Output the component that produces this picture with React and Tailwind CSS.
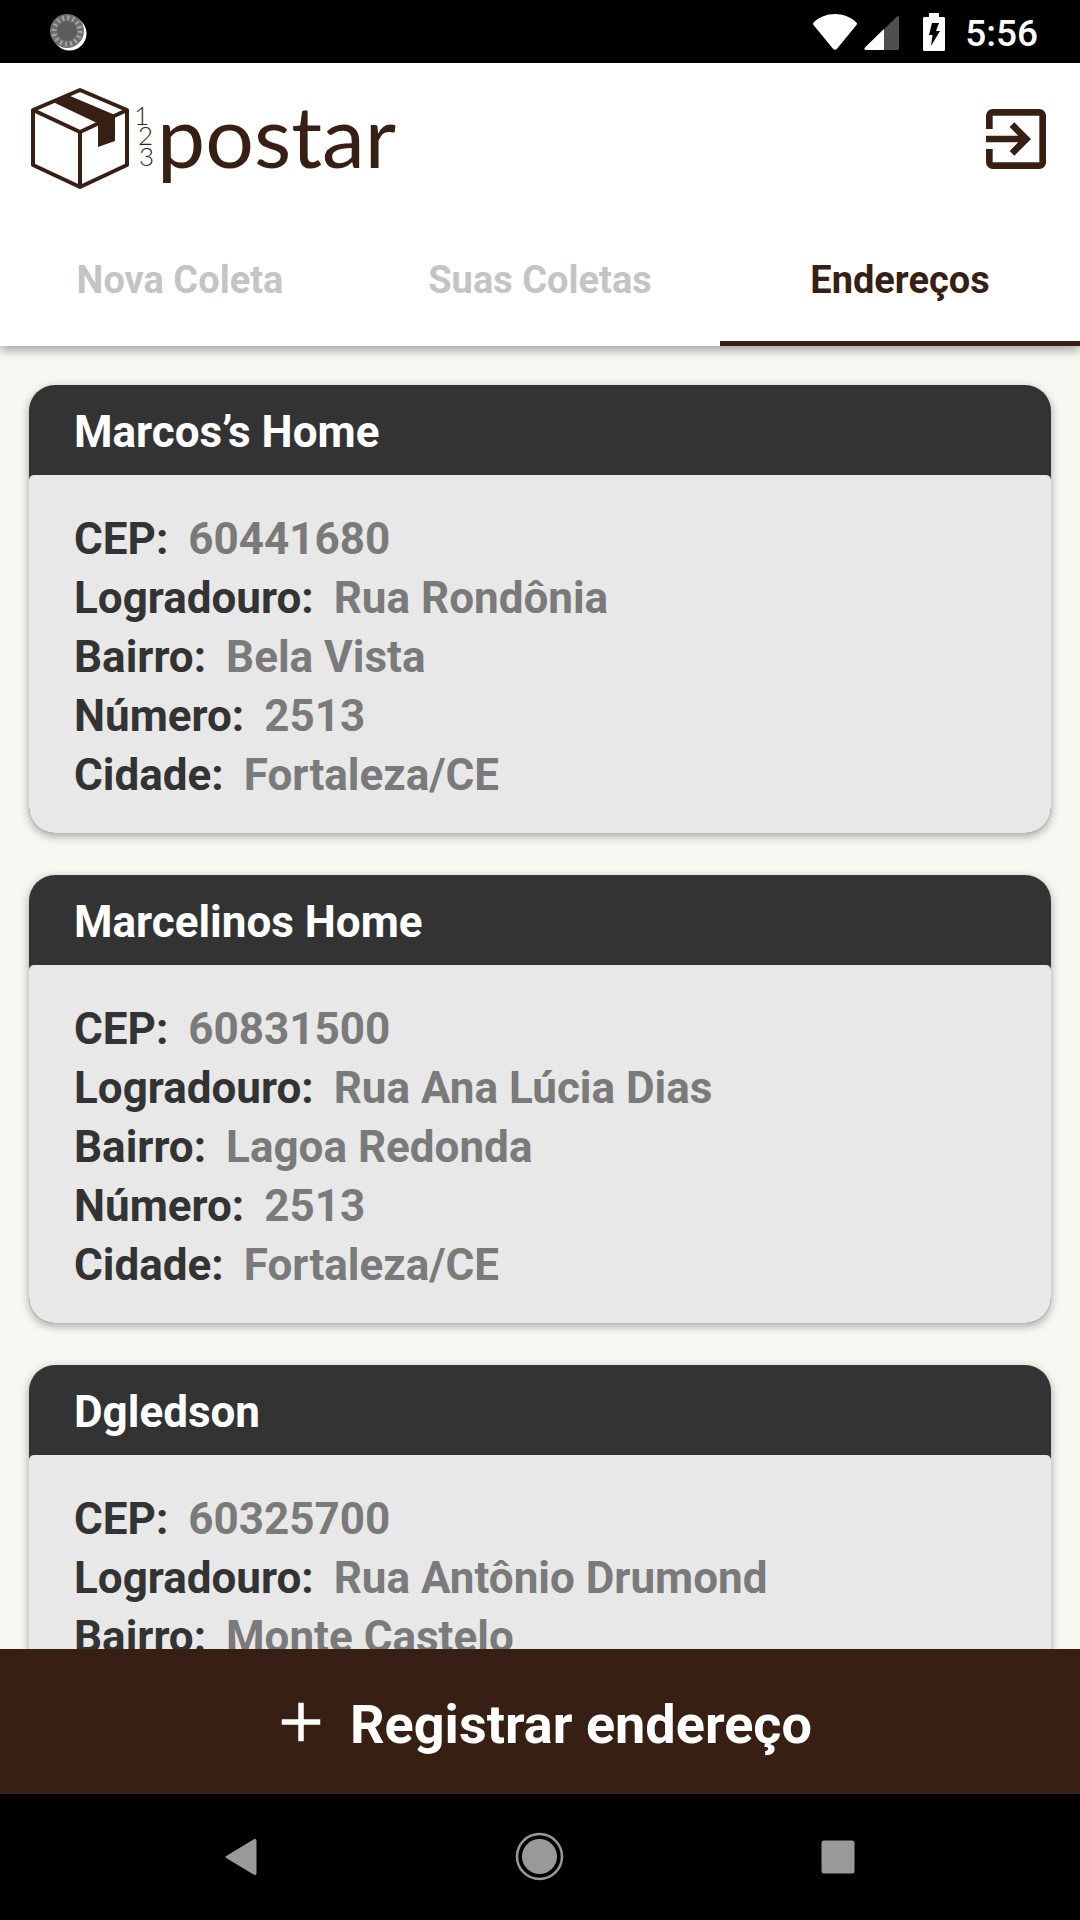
import { useState } from "react";
import { MdAdd, MdExitToApp } from "react-icons/md";

const tabs = ["Nova Coleta", "Suas Coletas", "Endereços"];

const addresses = [
  {
    name: "Marcos’s Home",
    cep: "60441680",
    street: "Rua Rondônia",
    district: "Bela Vista",
    number: "2513",
    city: "Fortaleza/CE",
  },
  {
    name: "Marcelinos Home",
    cep: "60831500",
    street: "Rua Ana Lúcia Dias",
    district: "Lagoa Redonda",
    number: "2513",
    city: "Fortaleza/CE",
  },
  {
    name: "Dgledson",
    cep: "60325700",
    street: "Rua Antônio Drumond",
    district: "Monte Castelo",
    number: "2513",
    city: "Fortaleza/CE",
  },
];

function StatusBar() {
  return (
    <div className="flex h-[63px] shrink-0 items-center justify-between bg-black pr-[42px] pl-12 text-white">
      <svg width="40" height="40" viewBox="0 0 40 40">
        <circle cx="21.500" cy="21.500" r="17" fill="#fff" />
        <circle cx="19" cy="19" r="17" fill="#6e6e6e" />
        <circle
          cx="19"
          cy="19"
          r="13"
          fill="none"
          stroke="#a8a8a8"
          strokeWidth="5"
          strokeDasharray="1.8 3.3"
        />
        <circle cx="19" cy="19" r="10" fill="#5c5c5c" />
      </svg>

      <div className="flex items-center">
        <svg width="46" height="40" viewBox="0 0 46 40">
          <path
            d="M1.6 10.5C7 5 15 2 23 2s16 3 21.4 8.500c.7.700.7 1.600.1 2.400L25 36.800c-1.100 1.300-2.900 1.300-4 0L1.500 12.900c-.6-.8-.6-1.700.1-2.400z"
            fill="#fff"
          />
        </svg>
        <svg width="36" height="40" viewBox="0 0 36 40" className="ml-1.5">
          <path
            d="M33 4.500 1 35.500c-1 1-.5 2.500 1 2.500h31.500c1 0 1.500-.5 1.500-1.500V5.500c0-1.500-1-2-2-1z"
            fill="#4f4f4f"
          />
          <path d="M20 17v21H2c-1.500 0-2-1.500-1-2.500z" fill="#fff" />
        </svg>
        <svg width="22" height="40" viewBox="0 0 22 40" className="ml-[23px]">
          <path
            d="M6 1h10v4h4.500c1 0 1.500.6 1.500 1.500v31c0 .9-.5 1.500-1.500 1.500h-19C.5 39 0 38.400 0 37.500v-31C0 5.600.5 5 1.500 5H6z"
            fill="#fff"
          />
          <path d="M9 11h7l-3 8h4L8 34l1.500-11H6z" fill="#000" />
        </svg>
        <span className="ml-5 pt-1 text-[37px] leading-[44px] font-medium">
          5:56
        </span>
      </div>
    </div>
  );
}

function Logo() {
  return (
    <svg
      width="370"
      height="110"
      viewBox="0 0 370 110"
      role="img"
      aria-label="123 postar"
      className="overflow-visible"
    >
      <g fill="none" stroke="#381f14" strokeWidth="4" strokeLinejoin="round">
        <path d="M50 6l47 20v55L50 103 3 81V26z" />
        <path d="M3 26l47 22 47-22M50 48v55" />
      </g>
      <path d="M23 18l16-6.500L85 31v26l-17 6V39.500z" fill="#381f14" />
      <text
        fill="#381f14"
        fontSize="26"
        fontWeight="300"
        className="[font-family:Lato,sans-serif]"
      >
        <tspan x="104" y="41">1</tspan>
        <tspan x="108" y="61">2</tspan>
        <tspan x="109" y="82">3</tspan>
      </text>
      <text
        x="127"
        y="84"
        fill="#381f14"
        fontSize="86"
        className="[font-family:Lato,sans-serif]"
      >
        postar
      </text>
    </svg>
  );
}

function Field({ label, value }) {
  return (
    <div className="flex gap-5">
      <dt className="text-[#333333]">{label}:</dt>
      <dd className="text-[#7a7a7a]">{value}</dd>
    </div>
  );
}

function AddressCard({ address }) {
  return (
    <article className="shrink-0 overflow-hidden rounded-[26px] bg-[#333333] text-[44px] leading-[59px] font-bold shadow-[0_3px_10px_rgba(0,0,0,0.35)]">
      <h2 className="px-[45px] pt-[18px] pb-[13px] text-white">
        {address.name}
      </h2>
      <dl className="rounded-t-[5px] bg-[#e8e8e8] px-[45px] pt-[35px] pb-7">
        <Field label="CEP" value={address.cep} />
        <Field label="Logradouro" value={address.street} />
        <Field label="Bairro" value={address.district} />
        <Field label="Número" value={address.number} />
        <Field label="Cidade" value={address.city} />
      </dl>
    </article>
  );
}

function NavBar() {
  return (
    <nav className="grid h-[126px] shrink-0 grid-cols-3 place-items-center bg-black px-[92px]">
      <button aria-label="Voltar">
        <svg width="48" height="50" viewBox="0 0 48 50">
          <path
            d="M10 23.500 36.500 7.500c1.500-1 3-.5 3 1.500v32c0 2-1.500 2.500-3 1.500L10 26.500c-2-1-2-2 0-3z"
            fill="#999"
          />
        </svg>
      </button>
      <button aria-label="Início">
        <svg width="50" height="50" viewBox="0 0 50 50">
          <circle cx="24.500" cy="24.500" r="22.500" fill="none" stroke="#999" strokeWidth="2.500" />
          <circle cx="24.500" cy="24.500" r="17.500" fill="#999" />
        </svg>
      </button>
      <button aria-label="Recentes">
        <svg width="50" height="50" viewBox="0 0 50 50">
          <rect x="7.500" y="8.500" width="33" height="33" rx="2.500" fill="#999" />
        </svg>
      </button>
    </nav>
  );
}

function App() {
  const [activeTab, setActiveTab] = useState("Endereços");

  return (
    <div className="flex h-screen flex-col bg-[#f8f7f2] [font-family:Roboto,sans-serif]">
      <StatusBar />

      <header className="relative z-10 shrink-0 bg-white shadow-[0_4px_10px_rgba(0,0,0,0.35)]">
        <div className="flex h-[152px] items-center justify-between pr-6 pl-[30px]">
          <Logo />
          <button aria-label="Sair">
            <MdExitToApp size={80} color="#381f14" />
          </button>
        </div>

        <div className="grid grid-cols-3" role="tablist">
          {tabs.map((tab) => (
            <button
              key={tab}
              role="tab"
              aria-selected={tab === activeTab}
              onClick={() => setActiveTab(tab)}
              className={`h-[131px] border-b-[5px] pt-1 text-[38px] font-bold ${
                tab === activeTab
                  ? "border-[#381f14] text-[#381f14]"
                  : "border-transparent text-[#c4c4c4]"
              }`}
            >
              {tab}
            </button>
          ))}
        </div>
      </header>

      <main className="flex min-h-0 flex-1 flex-col gap-[42px] overflow-y-auto px-[29px] pt-[39px] [scrollbar-width:none]">
        {addresses.map((address) => (
          <AddressCard key={address.name} address={address} />
        ))}
      </main>

      <button className="flex h-[145px] shrink-0 items-center justify-center gap-4 bg-[#381f14] text-[54px] font-bold text-white">
        <MdAdd size={66} />
        <span className="pt-1.5">Registrar endereço</span>
      </button>

      <NavBar />
    </div>
  );
}

export default App;
